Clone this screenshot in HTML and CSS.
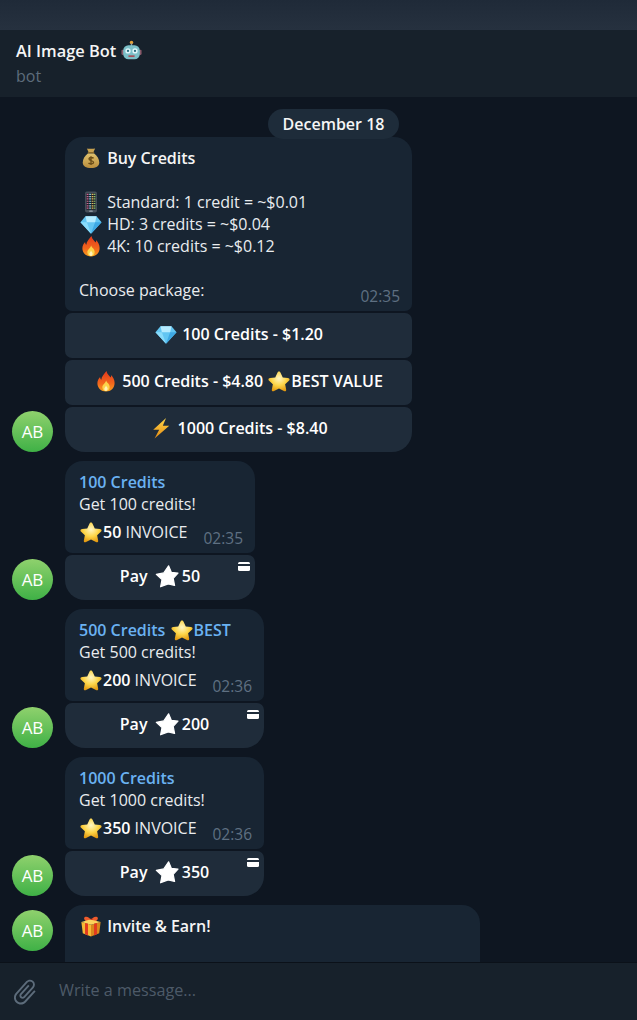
FILE: index.html
```html
<!DOCTYPE html>
<html lang="en">
<head>
    <meta charset="UTF-8">
    <title>AI Image Bot</title>
    <meta name="viewport" content="width=device-width, initial-scale=1.0">
    <link rel="stylesheet" href="styles.css">
</head>
<body>

    <!-- Emoji drawings, reused with <use> -->
    <svg class="defs" aria-hidden="true">
        <defs>
            <radialGradient id="gStar" cx="50%" cy="35%" r="65%">
                <stop offset="0" stop-color="#fff6c4"/>
                <stop offset="0.55" stop-color="#fdd548"/>
                <stop offset="1" stop-color="#e39a12"/>
            </radialGradient>
            <linearGradient id="gFire" x1="0" y1="0" x2="0" y2="1">
                <stop offset="0" stop-color="#e2381c"/>
                <stop offset="0.6" stop-color="#f2661c"/>
                <stop offset="1" stop-color="#f9a01f"/>
            </linearGradient>
            <linearGradient id="gBag" x1="0" y1="0" x2="0" y2="1">
                <stop offset="0" stop-color="#e0c26e"/>
                <stop offset="1" stop-color="#b98d3c"/>
            </linearGradient>
            <linearGradient id="gBolt" x1="0" y1="0" x2="0" y2="1">
                <stop offset="0" stop-color="#ffd84a"/>
                <stop offset="1" stop-color="#e58a12"/>
            </linearGradient>
        </defs>
        <symbol id="e-star" viewBox="0 0 24 24">
            <path fill="url(#gStar)" d="M12 1.500c.8 0 1.300.5 1.700 1.400l2.400 5.200 5.600.7c1.900.3 2.400 1.600 1.100 2.900l-4.100 3.900 1.100 5.600c.3 1.800-.9 2.600-2.400 1.700L12 20.100l-5.400 2.800c-1.500.9-2.700.1-2.400-1.700l1.100-5.600-4.100-3.900C-.1 10.400.4 9.100 2.300 8.800l5.600-.7 2.400-5.200c.4-.9.9-1.400 1.700-1.400z"/>
        </symbol>
        <symbol id="e-gem" viewBox="0 0 24 24">
            <path fill="#63c6f2" d="M6 3.500h12l5.500 6.500L12 22.500.5 10z"/>
            <path fill="#b6ecff" d="M6 3.500h12L16.500 10h-9z"/>
            <path fill="#8adcfb" d="M.5 10h7L12 22.500z"/>
            <path fill="#3ea9e4" d="M23.500 10h-7L12 22.500z"/>
        </symbol>
        <symbol id="e-fire" viewBox="0 0 24 24">
            <path fill="url(#gFire)" d="M12.500 1c.8 3.600 3 5 4.700 7.300.4-1 .4-1.800.2-2.800 2.600 2.300 4 5.500 4 8.700 0 5.500-4.200 9.300-9.400 9.300S2.600 19.700 2.600 14.500c0-3 1.400-5.200 3-7 0 1.300.4 2.300 1.300 3C7 7 9.800 4.600 12.500 1z"/>
            <path fill="#fcd34a" d="M12.200 11.500c.4 2.300 3.800 3.600 3.800 7 0 2.600-1.800 4.500-4 4.500s-4-1.900-4-4.300c0-2.800 3.200-4 4.200-7.200z"/>
            <path fill="#fff2b8" d="M12 17c.3 1.300 1.800 1.900 1.800 3.500 0 1.300-.8 2.300-1.800 2.300s-1.800-1-1.800-2.200c0-1.500 1.400-2.100 1.800-3.600z"/>
        </symbol>
        <symbol id="e-bolt" viewBox="0 0 24 24">
            <path fill="url(#gBolt)" d="M17.500 1 3.500 14h6.500L5 23.500 21 9.500h-7z"/>
        </symbol>
        <symbol id="e-bag" viewBox="0 0 24 24">
            <path fill="#c9a350" d="M7.500 1.500c1.500.8 3 .4 4.500.4s3-.4 4.500-.4l-2 4.500h-5z"/>
            <path fill="#8d6a28" d="M8.500 5.500h7V7h-7z"/>
            <path fill="url(#gBag)" d="M8.500 7h7c3.200 2.500 5.500 6 5.500 10 0 4-3.500 6-9 6s-9-2-9-6c0-4 2.300-7.500 5.500-10z"/>
            <path fill="none" stroke="#6b4d18" stroke-width="1.500" d="M14.800 12.300c-.7-1-4.800-1.400-5 .6-.2 2.300 5.300 1.500 5 4-.2 2-4.500 1.700-5.500.5M12 10v9.500"/>
        </symbol>
        <symbol id="e-phone" viewBox="0 0 24 24">
            <rect x="5.500" y="0.500" width="13" height="23" rx="2" fill="#46505b"/>
            <rect x="7" y="2.500" width="10" height="18" fill="#1c232b"/>
            <path stroke="#d0608f" stroke-width="2" stroke-dasharray="1.300 1.200" d="M8.300 3v17"/>
            <path stroke="#7cc4de" stroke-width="2" stroke-dasharray="1.300 1.200" d="M11 3v17"/>
            <path stroke="#e3ba5c" stroke-width="2" stroke-dasharray="1.300 1.200" d="M13.700 3v17"/>
            <path stroke="#86c46c" stroke-width="1.500" stroke-dasharray="1.300 1.200" d="M16 3v17"/>
            <rect x="10" y="21.300" width="4" height="1.400" rx=".7" fill="#9aa4ae"/>
        </symbol>
        <symbol id="e-gift" viewBox="0 0 24 24">
            <path fill="#ef5b2c" d="M5 2.500c2.500-1.500 5.500.5 7 3 1.500-2.500 4.500-4.500 7-3 1.500 1.500-.5 4-3 5H8c-2.500-1-4.500-3.500-3-5z"/>
            <path fill="#b52a1c" d="M10.500 4h3v3.500h-3z"/>
            <path fill="#f6b834" d="M1.500 7.500 12 10.500v13L3 20z"/>
            <path fill="#d9881c" d="M22.500 7.500 12 10.500v13l9-3.500z"/>
            <path fill="#fbd35c" d="M1.500 7.500 11 5l11.500 2.500L12 10.500z"/>
            <path fill="#e23a1f" d="M5.500 8.700l3.200.9v12.700L5.500 21zM15.300 9.600l3.200-.9V21l-3.200 1.300z"/>
        </symbol>
        <symbol id="e-robot" viewBox="0 0 24 24">
            <circle cx="12" cy="2.800" r="2" fill="#e3a13a"/>
            <rect x="11.200" y="4" width="1.600" height="3" fill="#8aa0a8"/>
            <rect x="0.500" y="11" width="3" height="6" rx="1.200" fill="#8a5a6a"/>
            <rect x="20.500" y="11" width="3" height="6" rx="1.200" fill="#8a5a6a"/>
            <rect x="2.500" y="6" width="19" height="16" rx="6" fill="#7cc0c8"/>
            <circle cx="8" cy="12.500" r="3" fill="#dff6fa"/>
            <circle cx="16" cy="12.500" r="3" fill="#dff6fa"/>
            <circle cx="8" cy="12.500" r="1.300" fill="#2b6e80"/>
            <circle cx="16" cy="12.500" r="1.300" fill="#2b6e80"/>
            <path fill="#a6505a" d="M8.500 17.500h7v2h-7z"/>
        </symbol>
        <symbol id="e-whitestar" viewBox="0 0 24 24">
            <path fill="#fff" stroke="#fff" stroke-width="1.200" stroke-linejoin="round" d="M13.600 1.800 16.300 8.300 23 9.200 18.200 14.300 19.600 21.500 13.200 19.900 5.600 22.800 7 15.500 1.300 10.300 8.800 8.900z"/>
        </symbol>
    </svg>

    <div class="topbar"></div>

    <!-- Chat header -->
    <header class="chat-head">
        <div class="chat-title">AI Image Bot <svg class="emoji emoji-title"><use href="#e-robot"/></svg></div>
        <div class="chat-status">bot</div>
    </header>

    <!-- Messages -->
    <main class="messages">
        <div class="date-pill">December 18</div>

        <div class="row">
            <div class="avatar">AB</div>
            <div class="col col-buy">
                <div class="bubble">
                    <div class="line strong"><svg class="emoji"><use href="#e-bag"/></svg> Buy Credits</div>
                    <div class="line"></div>
                    <div class="line"><svg class="emoji"><use href="#e-phone"/></svg> Standard: 1 credit = ~$0.01</div>
                    <div class="line"><svg class="emoji"><use href="#e-gem"/></svg> HD: 3 credits = ~$0.04</div>
                    <div class="line"><svg class="emoji"><use href="#e-fire"/></svg> 4K: 10 credits = ~$0.12</div>
                    <div class="line"></div>
                    <div class="line line-low">Choose package:</div>
                    <span class="time">02:35</span>
                </div>
                <div class="btn"><svg class="emoji"><use href="#e-gem"/></svg> 100 Credits - $1.20</div>
                <div class="btn"><svg class="emoji"><use href="#e-fire"/></svg> 500 Credits - $4.80 <svg class="emoji"><use href="#e-star"/></svg>BEST VALUE</div>
                <div class="btn"><svg class="emoji"><use href="#e-bolt"/></svg> 1000 Credits - $8.40</div>
            </div>
        </div>

        <div class="row">
            <div class="avatar">AB</div>
            <div class="col col-50">
                <div class="bubble">
                    <div class="line line-low invoice-title">100 Credits</div>
                    <div class="line line-low">Get 100 credits!</div>
                    <div class="line invoice-line"><svg class="emoji"><use href="#e-star"/></svg><b>50</b> INVOICE</div>
                    <span class="time">02:35</span>
                </div>
                <div class="btn pay">Pay <svg class="emoji pay-star"><use href="#e-whitestar"/></svg> 50<span class="card"></span></div>
            </div>
        </div>

        <div class="row">
            <div class="avatar">AB</div>
            <div class="col col-wide">
                <div class="bubble">
                    <div class="line invoice-title">500 Credits <svg class="emoji"><use href="#e-star"/></svg>BEST</div>
                    <div class="line line-low">Get 500 credits!</div>
                    <div class="line invoice-line"><svg class="emoji"><use href="#e-star"/></svg><b>200</b> INVOICE</div>
                    <span class="time">02:36</span>
                </div>
                <div class="btn pay">Pay <svg class="emoji pay-star"><use href="#e-whitestar"/></svg> 200<span class="card"></span></div>
            </div>
        </div>

        <div class="row">
            <div class="avatar">AB</div>
            <div class="col col-wide">
                <div class="bubble">
                    <div class="line line-low invoice-title">1000 Credits</div>
                    <div class="line line-low">Get 1000 credits!</div>
                    <div class="line invoice-line"><svg class="emoji"><use href="#e-star"/></svg><b>350</b> INVOICE</div>
                    <span class="time">02:36</span>
                </div>
                <div class="btn pay">Pay <svg class="emoji pay-star"><use href="#e-whitestar"/></svg> 350<span class="card"></span></div>
            </div>
        </div>

        <div class="row row-stuck">
            <div class="avatar">AB</div>
            <div class="col col-invite">
                <div class="bubble bubble-open">
                    <div class="line strong"><svg class="emoji"><use href="#e-gift"/></svg> Invite &amp; Earn!</div>
                </div>
            </div>
        </div>
    </main>

    <!-- Message input -->
    <footer class="composer">
        <svg class="clip" viewBox="0 0 24 24">
            <path transform="rotate(42 12 12)" d="M16.500 6v11.500c0 2.210-1.790 4-4 4s-4-1.790-4-4V5c0-1.380 1.120-2.500 2.500-2.500s2.500 1.120 2.500 2.500v10.500c0 .55-.45 1-1 1s-1-.45-1-1V6H10v9.500c0 1.380 1.120 2.500 2.500 2.500s2.500-1.120 2.500-2.500V5c0-2.210-1.790-4-4-4S7 2.790 7 5v12.500c0 3.040 2.460 5.500 5.500 5.500s5.500-2.460 5.500-5.500V6h-1.500z"/>
        </svg>
        <span class="placeholder">Write a message...</span>
    </footer>

</body>
</html>
```

FILE: styles.css
```css
html, body {
    height: 100%;
}
body {
    margin: 0;
    overflow: hidden;
    display: flex;
    flex-direction: column;
    background-color: #0e1621;
    color: #f5f5f5;
    font-family: "Open Sans", sans-serif;
    font-size: 16px;
}
.defs {
    display: block;
    width: 0;
    height: 0;
}

/* Top */
.topbar {
    height: 30px;
    flex-shrink: 0;
    background: linear-gradient(#1f2a38, #26313f);
}
.chat-head {
    height: 67px;
    flex-shrink: 0;
    padding: 10px 16px 0;
    box-sizing: border-box;
    background-color: #17212b;
}
.chat-title {
    height: 22px;
    line-height: 16px;
    font-size: 16.4px;
    font-weight: 600;
    color: #f5f5f5;
}
.chat-status {
    margin-top: 4px;
    line-height: 20px;
    color: #5d6c7b;
}

/* Messages */
.messages {
    flex: 1;
    min-height: 0;
    overflow: hidden;
    padding-top: 12px;
}
.date-pill {
    position: relative;
    z-index: 1;
    width: 131px;
    height: 30px;
    margin: 0 0 -2px 268px;
    border-radius: 15px;
    background-color: #1e2c3a;
    text-align: center;
    line-height: 30px;
    font-weight: 600;
}
.row {
    display: flex;
    align-items: flex-end;
    margin-bottom: 9px;
    padding-left: 12px;
}
.row-stuck {
    align-items: flex-start;
}
.row-stuck .avatar {
    margin-top: 5px;
}
.avatar {
    flex-shrink: 0;
    width: 41px;
    height: 41px;
    margin-right: 12px;
    border-radius: 50%;
    background: linear-gradient(#8fd16d, #3fb146);
    color: #fff;
    text-align: center;
    line-height: 41px;
    font-size: 17px;
    font-weight: 500;
}
.col {
    display: flex;
    flex-direction: column;
    gap: 2px;
}
.col-buy { width: 347px; }
.col-50 { width: 190px; }
.col-wide { width: 199px; }
.col-invite { width: 415px; }

.bubble {
    position: relative;
    padding: 10px 14px;
    border-radius: 18px 18px 7px 7px;
    background-color: #182533;
}
.bubble-open {
    height: 120px;
    border-radius: 18px 18px 0 0;
}
.line {
    height: 22px;
    line-height: 21px;
    white-space: nowrap;
    color: #e9ecef;
}
.line-low {
    line-height: 23px;
}
.strong {
    font-weight: 600;
    color: #f5f5f5;
}
.invoice-title {
    font-weight: 600;
    color: #6ab2f2;
}
.invoice-line {
    margin-top: 6px;
}
.invoice-line b {
    font-weight: 600;
    color: #fff;
}
.time {
    position: absolute;
    right: 12px;
    bottom: 5px;
    line-height: 20px;
    font-size: 15.5px;
    color: #5f7082;
}
.emoji {
    width: 22px;
    height: 22px;
    margin: 0 1px;
    vertical-align: -5px;
}
.emoji-title {
    width: 21px;
    height: 21px;
    margin-left: 0;
    vertical-align: -4px;
}

/* Inline buttons */
.btn {
    position: relative;
    height: 45px;
    padding-bottom: 3px;
    box-sizing: border-box;
    display: flex;
    align-items: center;
    justify-content: center;
    white-space: pre;
    border-radius: 7px;
    background-color: #1f2c3a;
    font-weight: 600;
    color: #fff;
}
.btn:last-child {
    border-radius: 7px 7px 20px 20px;
}
.pay-star {
    width: 24px;
    height: 24px;
    margin: 0 -1px 0 3px;
}
.card {
    position: absolute;
    top: 7px;
    right: 5px;
    width: 12px;
    height: 9px;
    border-radius: 1.5px;
    background: linear-gradient(#fff 0, #fff 25%, #1f2c3a 25%, #1f2c3a 42%, #fff 42%);
}

/* Composer */
.composer {
    height: 58px;
    flex-shrink: 0;
    display: flex;
    align-items: center;
    box-sizing: border-box;
    padding: 0 0 3px 10px;
    background-color: #17212b;
    border-top: 1px solid #0b1119;
}
.clip {
    width: 30px;
    height: 30px;
    margin: 4px 19px 0 0;
    fill: #5d6c7b;
}
.placeholder {
    font-size: 16.2px;
    color: #4d5a68;
}
```
